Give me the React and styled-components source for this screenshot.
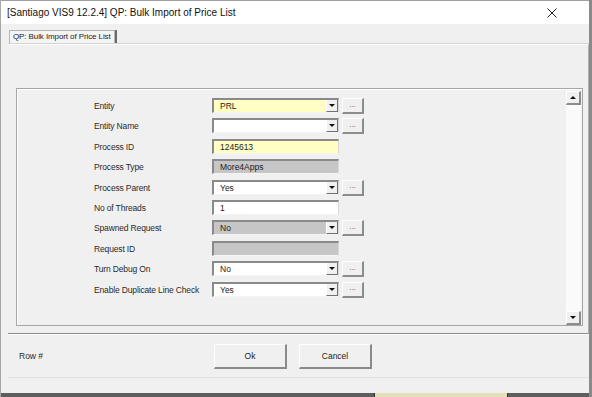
import React from 'react'
import styled, { createGlobalStyle } from 'styled-components'

const GlobalStyle = createGlobalStyle`
    html, body {
        margin: 0;
        padding: 0;
        background: #f0f0f0;
    }
    * {
        box-sizing: border-box;
    }
`

const Window = styled.div`
    width: 592px;
    height: 397px;
    display: flex;
    flex-direction: column;
    background: #f0f0f0;
    border-left: 1px solid #a8a8a8;
    border-right: 3px solid #8a8a8a;
    font-family: "Liberation Sans", Arial, sans-serif;
    color: #1a1a1a;
    overflow: hidden;
`

const TitleBar = styled.div`
    height: 24px;
    flex: none;
    display: flex;
    align-items: center;
    justify-content: space-between;
    background: #ffffff;
    border-top: 1px solid #a0a0a0;
    padding: 0 32px 0 6px;
    font-size: 10px;
    color: #111;
`

const CloseIcon = styled.svg`
    width: 10px;
    height: 10px;
`

const Main = styled.div`
    flex: 1;
    display: flex;
    flex-direction: column;
    padding: 6px 0 0 7px;
`

const TabStrip = styled.div`
    height: 14px;
    display: flex;
    padding-left: 1px;
`

const Tab = styled.div`
    height: 14px;
    padding: 1px 3px 0 3px;
    font-size: 8px;
    letter-spacing: -0.1px;
    color: #222;
    background: #f4f4f4;
    border: 1px solid #b4b4b4;
    border-bottom: none;
    box-shadow: 2px 0 0 #6a6a6a;
    white-space: nowrap;
`

const TabPanel = styled.div`
    height: 290px;
    flex: none;
    border-top: 1px solid #ffffff;
    border-right: 1px solid #b0b0b0;
    border-bottom: 1px solid #8c8c8c;
    box-shadow: 0 -1px 0 #d4d4d4;
    padding: 43px 5px 7px 8px;
`

const Frame = styled.div`
    height: 100%;
    display: flex;
    border: 1px solid #a6a6a6;
    box-shadow: inset 1px 1px 0 #ffffff;
    padding: 2px 1px 0 0;
`

const Form = styled.div`
    flex: 1;
    display: grid;
    grid-template-columns: 118px 127px 26px;
    grid-auto-rows: 20.4px;
    align-content: start;
    padding: 7px 0 0 77px;
`

const Label = styled.div`
    font-size: 8.5px;
    letter-spacing: -0.15px;
    line-height: 17px;
    color: #2a2a2a;
    white-space: nowrap;
`

const Field = styled.div`
    height: 15px;
    display: flex;
    align-items: stretch;
    background: ${p => (p.$tone === 'yellow' ? '#ffffc4' : p.$tone === 'gray' ? '#c6c6c6' : '#ffffff')};
    border-top: 2px solid #8a8a8a;
    border-left: 2px solid #8a8a8a;
    border-right: 1px solid #d8d8d8;
    border-bottom: 1px solid #f4f4f4;
`

const FieldText = styled.div`
    flex: 1;
    font-size: 8.5px;
    line-height: 12px;
    padding-left: 6px;
    color: #222;
`

const DropButton = styled.div`
    width: 12px;
    display: flex;
    align-items: center;
    justify-content: center;
    background: #f0f0f0;
    border-left: 1px solid #ffffff;
    border-right: 1px solid #707070;
    border-bottom: 1px solid #707070;
`

const Arrow = styled.div`
    width: 0;
    height: 0;
    border-left: 3px solid transparent;
    border-right: 3px solid transparent;
    border-${p => (p.$up ? 'bottom' : 'top')}: 3px solid #111;
`

const DotsButton = styled.div`
    width: 22px;
    height: 16px;
    margin-left: 3px;
    display: flex;
    align-items: center;
    justify-content: center;
    font-size: 8px;
    color: #555;
    background: #f0f0f0;
    border-top: 1px solid #ffffff;
    border-left: 1px solid #ffffff;
    border-right: 2px solid #8c8c8c;
    border-bottom: 2px solid #8c8c8c;
    padding-bottom: 3px;
`

const ScrollBar = styled.div`
    width: 15px;
    display: flex;
    flex-direction: column;
    background: #fafafa;
`

const ScrollButton = styled.div`
    height: 14px;
    display: flex;
    align-items: center;
    justify-content: center;
    background: #f0f0f0;
    border-top: 1px solid #ffffff;
    border-left: 1px solid #ffffff;
    border-right: 2px solid #8c8c8c;
    border-bottom: 2px solid #8c8c8c;
`

const Track = styled.div`
    flex: 1;
`

const Footer = styled.div`
    height: 44px;
    flex: none;
    display: flex;
    align-items: center;
    border-top: 1px solid #ffffff;
    border-bottom: 1px solid #e2e2e2;
    padding: 0 0 0 11px;
`

const RowLabel = styled.div`
    width: 195px;
    font-size: 8.5px;
    color: #2a2a2a;
`

const Button = styled.div`
    width: 73px;
    height: 25px;
    margin-right: 12px;
    display: flex;
    align-items: center;
    justify-content: center;
    font-size: 8.5px;
    color: #222;
    background: #f0f0f0;
    border-top: 1px solid #ffffff;
    border-left: 1px solid #ffffff;
    border-right: 2px solid #8a8a8a;
    border-bottom: 2px solid #8a8a8a;
`

const BackStrip = styled.div`
    height: 4px;
    flex: none;
    margin-top: 14px;
    display: flex;
    background: #5e5e5e;
    padding-left: 373px;
`

const BackPane = styled.div`
    width: 134px;
    background: #e4e1b8;
    border-left: 1px solid #333;
    border-right: 1px solid #333;
`

const rows = [
    { label: 'Entity', value: 'PRL', tone: 'yellow', drop: true },
    { label: 'Entity Name', value: '', drop: true },
    { label: 'Process ID', value: '1245613', tone: 'yellow' },
    { label: 'Process Type', value: 'More4Apps', tone: 'gray' },
    { label: 'Process Parent', value: 'Yes', drop: true },
    { label: 'No of Threads', value: '1' },
    { label: 'Spawned Request', value: 'No', tone: 'gray', drop: true },
    { label: 'Request ID', value: '', tone: 'gray' },
    { label: 'Turn Debug On', value: 'No', drop: true },
    { label: 'Enable Duplicate Line Check', value: 'Yes', drop: true },
]

export default function App() {
    return (
        <Window>
            <GlobalStyle />
            <TitleBar>
                <span>[Santiago VIS9 12.2.4] QP: Bulk Import of Price List</span>
                <CloseIcon viewBox="0 0 10 10">
                    <path d="M0.5 0.5 L9.5 9.5 M9.5 0.5 L0.5 9.5" stroke="#222" strokeWidth="1" />
                </CloseIcon>
            </TitleBar>
            <Main>
                <TabStrip>
                    <Tab>QP: Bulk Import of Price List</Tab>
                </TabStrip>
                <TabPanel>
                    <Frame>
                        <Form>
                            {rows.map(row => (
                                <React.Fragment key={row.label}>
                                    <Label>{row.label}</Label>
                                    <Field $tone={row.tone}>
                                        <FieldText>{row.value}</FieldText>
                                        {row.drop && (
                                            <DropButton>
                                                <Arrow />
                                            </DropButton>
                                        )}
                                    </Field>
                                    <div>{row.drop && <DotsButton>...</DotsButton>}</div>
                                </React.Fragment>
                            ))}
                        </Form>
                        <ScrollBar>
                            <ScrollButton>
                                <Arrow $up />
                            </ScrollButton>
                            <Track />
                            <ScrollButton>
                                <Arrow />
                            </ScrollButton>
                        </ScrollBar>
                    </Frame>
                </TabPanel>
                <Footer>
                    <RowLabel>Row #</RowLabel>
                    <Button>Ok</Button>
                    <Button>Cancel</Button>
                </Footer>
            </Main>
            <BackStrip>
                <BackPane />
            </BackStrip>
        </Window>
    )
}
